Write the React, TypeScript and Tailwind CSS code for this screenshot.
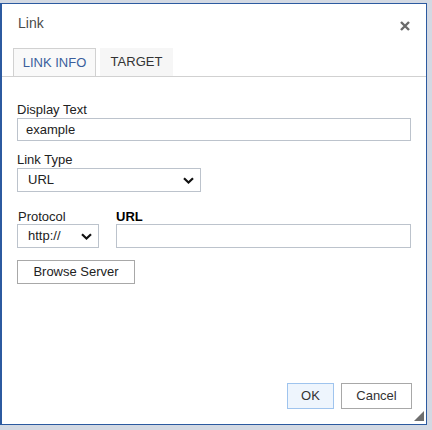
import React from "react";

function Chevron() {
  return (
    <svg width="11" height="7" viewBox="0 0 11 7" className="shrink-0">
      <path d="M1 1.2 L5.5 5.5 L10 1.2" fill="none" stroke="#111" strokeWidth="2.2" />
    </svg>
  );
}

function Select({ value, width }: { value: string; width: string }) {
  return (
    <div
      className={`${width} h-[24px] border border-[#bcc3cc] bg-white flex items-center justify-between pl-[10px] pr-[6px] text-[13px] text-[#222]`}
    >
      <span>{value}</span>
      <Chevron />
    </div>
  );
}

export default function App() {
  return (
    <div
      className="w-[432px] h-[430px] bg-[#d3d9e3] pt-[3px] overflow-hidden"
      style={{ fontFamily: '"Liberation Sans", Arial, sans-serif' }}
    >
      <div className="w-[427px] h-[422px] bg-white border border-l-2 border-[#2c5aa0] flex flex-col relative">
        {/* Title */}
        <div className="h-[44px] flex items-start justify-between pl-[16px] pr-[15px]">
          <span className="pt-[11px] text-[14px] leading-[17px] text-[#4a4a4a]">Link</span>
          <svg width="10" height="10" viewBox="0 0 10 10" className="mt-[17px] mr-[1px]">
            <path d="M1 1 L9 9 M9 1 L1 9" stroke="#6b6b6b" strokeWidth="2.4" />
          </svg>
        </div>

        {/* Tabs */}
        <div className="flex gap-[4px] pl-[11px] border-b border-[#d1d1d1]">
          <div className="w-[83px] h-[28px] border border-b-0 border-[#d1d1d1] bg-[#f9f9f9] flex items-center justify-center text-[13px] text-[#3a5e9c]">
            LINK INFO
          </div>
          <div className="w-[73px] h-[28px] bg-[#f6f6f6] flex items-center justify-center text-[13px] text-[#333]">
            TARGET
          </div>
        </div>

        {/* Body */}
        <div className="px-[15px] pt-[25px] text-[13px] text-[#222]">
          <div className="leading-[16px]">Display Text</div>
          <div className="h-[23px] border border-[#bcc3cc] flex items-center pl-[8px] text-[#222]">
            example
          </div>

          <div className="leading-[16px] mt-[11px]">Link Type</div>
          <Select value="URL" width="w-[184px]" />

          <div className="flex gap-[17px] mt-[17px]">
            <div className="w-[82px]">
              <div className="leading-[15px] pl-[1px]">Protocol</div>
              <Select value="http://" width="w-[82px]" />
            </div>
            <div className="flex-1">
              <div className="leading-[15px] font-bold text-black">URL</div>
              <div className="h-[24px] border border-[#bcc3cc]" />
            </div>
          </div>

          <button className="mt-[12px] w-[118px] h-[24px] border border-[#a8a8a8] bg-white text-[13px] text-[#222]">
            Browse Server
          </button>
        </div>

        {/* Footer */}
        <div className="mt-auto flex justify-end gap-[7px] pr-[14px] pb-[15px]">
          <button className="w-[47px] h-[26px] border border-[#9fc4ee] bg-[#eef5fd] text-[13px] text-[#333]">
            OK
          </button>
          <button className="w-[71px] h-[26px] border border-[#a8a8a8] bg-white text-[13px] text-[#333]">
            Cancel
          </button>
        </div>

        {/* Resize grip */}
        <svg width="10" height="10" viewBox="0 0 10 10" className="absolute right-[2px] bottom-[3px]">
          <path d="M10 0 L10 10 L0 10 Z" fill="#6e6e6e" />
        </svg>
      </div>
    </div>
  );
}
